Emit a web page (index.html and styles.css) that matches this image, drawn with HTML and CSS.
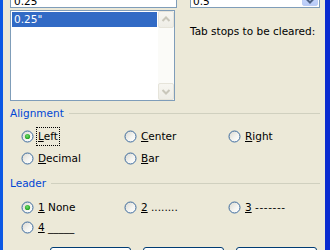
FILE: index.html
```html
<!DOCTYPE html>
<html>
<head>
<meta charset="utf-8">
<link rel="stylesheet" href="styles.css">
</head>
<body>
<svg class="defs" width="0" height="0" aria-hidden="true">
  <defs>
    <linearGradient id="rfill" x1="0" y1="0" x2="1" y2="1">
      <stop offset="0" stop-color="#d8d7cf"/>
      <stop offset="0.6" stop-color="#f6f6f3"/>
      <stop offset="1" stop-color="#ffffff"/>
    </linearGradient>
    <radialGradient id="rdot" cx="0.45" cy="0.4" r="0.6">
      <stop offset="0" stop-color="#6fe06a"/>
      <stop offset="1" stop-color="#1f9b1f"/>
    </radialGradient>
  </defs>
</svg>
<div class="window">
  <div class="client">
    <div class="top">
      <div class="col-left">
        <div class="edit">0.25"</div>
        <div class="list">
          <div class="items">
            <div class="item sel">0.25"</div>
          </div>
          <div class="vscroll">
            <div class="sbtn"><svg width="14" height="15" viewBox="0 0 14 15"><path d="M3.5 9 L7 5.5 L10.5 9" fill="none" stroke="#c9c7bb" stroke-width="2"/></svg></div>
            <div class="track"></div>
            <div class="sbtn"><svg width="14" height="15" viewBox="0 0 14 15"><path d="M3.5 6 L7 9.5 L10.5 6" fill="none" stroke="#c9c7bb" stroke-width="2"/></svg></div>
          </div>
        </div>
      </div>
      <div class="col-right">
        <div class="combo">
          <span class="combo-text">0.5"</span>
          <div class="drop"><svg width="14" height="18" viewBox="0 0 14 18"><path d="M3.5 8 L7 11.5 L10.5 8" fill="none" stroke="#4d6185" stroke-width="2"/></svg></div>
        </div>
        <div class="hint">Tab stops to be cleared:</div>
      </div>
    </div>

    <div class="group-head"><span class="group-label">Alignment</span><span class="group-line"></span></div>
    <div class="radios align-rows">
      <div class="opt"><svg class="radio" viewBox="0 0 13 13"><circle cx="6.5" cy="6.5" r="5.5" fill="url(#rfill)" stroke="#3c6a9d"/><circle cx="6.5" cy="6.5" r="2.6" fill="url(#rdot)"/></svg><span class="lbl focus"><u>L</u>eft</span></div>
      <div class="opt"><svg class="radio" viewBox="0 0 13 13"><circle cx="6.5" cy="6.5" r="5.5" fill="url(#rfill)" stroke="#3c6a9d"/></svg><span class="lbl"><u>C</u>enter</span></div>
      <div class="opt"><svg class="radio" viewBox="0 0 13 13"><circle cx="6.5" cy="6.5" r="5.5" fill="url(#rfill)" stroke="#3c6a9d"/></svg><span class="lbl"><u>R</u>ight</span></div>
      <div class="opt"><svg class="radio" viewBox="0 0 13 13"><circle cx="6.5" cy="6.5" r="5.5" fill="url(#rfill)" stroke="#3c6a9d"/></svg><span class="lbl"><u>D</u>ecimal</span></div>
      <div class="opt"><svg class="radio" viewBox="0 0 13 13"><circle cx="6.5" cy="6.5" r="5.5" fill="url(#rfill)" stroke="#3c6a9d"/></svg><span class="lbl"><u>B</u>ar</span></div>
    </div>

    <div class="group-head leader-head"><span class="group-label">Leader</span><span class="group-line"></span></div>
    <div class="radios leader-rows">
      <div class="opt"><svg class="radio" viewBox="0 0 13 13"><circle cx="6.5" cy="6.5" r="5.5" fill="url(#rfill)" stroke="#3c6a9d"/><circle cx="6.5" cy="6.5" r="2.6" fill="url(#rdot)"/></svg><span class="lbl"><u>1</u> None</span></div>
      <div class="opt"><svg class="radio" viewBox="0 0 13 13"><circle cx="6.5" cy="6.5" r="5.5" fill="url(#rfill)" stroke="#3c6a9d"/></svg><span class="lbl"><u>2</u> ........</span></div>
      <div class="opt"><svg class="radio" viewBox="0 0 13 13"><circle cx="6.5" cy="6.5" r="5.5" fill="url(#rfill)" stroke="#3c6a9d"/></svg><span class="lbl"><u>3</u> <span class="dashes">-------</span></span></div>
      <div class="opt"><svg class="radio" viewBox="0 0 13 13"><circle cx="6.5" cy="6.5" r="5.5" fill="url(#rfill)" stroke="#3c6a9d"/></svg><span class="lbl"><u>4</u> _____</span></div>
    </div>

    <div class="buttons">
      <button class="btn">Set</button>
      <button class="btn">Clear</button>
      <button class="btn">Clear All</button>
    </div>
  </div>
</div>
</body>
</html>
```

FILE: styles.css
```css
* { box-sizing: border-box; }
html, body { margin: 0; padding: 0; }
body {
  width: 330px;
  height: 250px;
  overflow: hidden;
  background: #ece9d8;
  font-family: "DejaVu Sans", sans-serif;
  font-size: 10.5px;
  color: #000;
}
.defs { position: absolute; width: 0; height: 0; }
.window {
  height: 250px;
  display: flex;
  border-left: 3px solid #0b58e4;
  border-right: 5px solid #0a2bd0;
}
.client {
  flex: 1;
  padding: 0 5px 0 7px;
}
.top {
  display: grid;
  grid-template-columns: 167px 130px;
  column-gap: 13px;
}
.edit {
  height: 20px;
  margin-top: -12px;
  border: 1px solid #7f9db9;
  background: #fff;
  padding: 6px 0 0 3px;
  line-height: 13px;
}
.list {
  margin-top: 2px;
  width: 165px;
  height: 91px;
  border: 1px solid #7f9db9;
  background: #fff;
  display: flex;
}
.items { flex: 1; padding: 1px; }
.item {
  height: 15px;
  line-height: 15px;
  padding-left: 2px;
}
.item.sel { background: #316ac5; color: #fff; }
.vscroll {
  width: 16px;
  display: flex;
  flex-direction: column;
  background: #fbfbf8;
}
.track { flex: 1; }
.sbtn {
  height: 17px;
  border: 1px solid #e6e4da;
  border-radius: 2px;
  background: linear-gradient(#f7f6f1, #eeede6);
  display: flex;
  align-items: center;
  justify-content: center;
}
.sbtn svg { display: block; }
.combo {
  height: 20px;
  margin-top: -12px;
  border: 1px solid #7f9db9;
  background: #fff;
  display: flex;
}
.combo-text {
  flex: 1;
  padding: 6px 0 0 2px;
  line-height: 13px;
}
.drop {
  width: 16px;
  margin: 1px;
  border: 1px solid #bccdf5;
  border-radius: 2px;
  background: linear-gradient(#d6e2fd, #b8cbf8);
  display: flex;
  justify-content: center;
  overflow: hidden;
}
.drop svg { display: block; }
.hint {
  margin-top: 17px;
  line-height: 13px;
}
.group-head {
  display: flex;
  align-items: center;
  height: 13px;
  margin-top: 6px;
}
.group-label {
  color: #0046d5;
  line-height: 13px;
}
.group-line {
  flex: 1;
  height: 1px;
  margin-left: 5px;
  background: #d0d0bf;
}
.radios {
  display: grid;
  grid-template-columns: 103px 104px 1fr;
  padding-left: 11px;
}
.align-rows {
  margin-top: 5px;
  grid-auto-rows: 22px;
}
.leader-head { margin-top: 8px; }
.leader-rows {
  margin-top: 7px;
  grid-auto-rows: 20px;
}
.opt {
  display: flex;
  align-items: center;
}
.radio { width: 13px; height: 13px; flex: none; display: block; }
.lbl {
  margin-left: 2px;
  margin-top: 1px;
  border: 1px dotted transparent;
  padding: 2px 1px;
  line-height: 13px;
  white-space: nowrap;
}
.lbl.focus { border-color: #000; }
.dashes { letter-spacing: 0.6px; }
.buttons {
  display: flex;
  gap: 12px;
  padding-left: 40px;
  margin-top: 10px;
}
.btn {
  width: 81px;
  height: 23px;
  border: 1px solid #003c74;
  border-radius: 3px;
  background: linear-gradient(#ffffff, #f0f0ea 80%, #d6d0c5);
  font-family: "DejaVu Sans", sans-serif;
  font-size: 10.5px;
  padding: 0;
}
```
